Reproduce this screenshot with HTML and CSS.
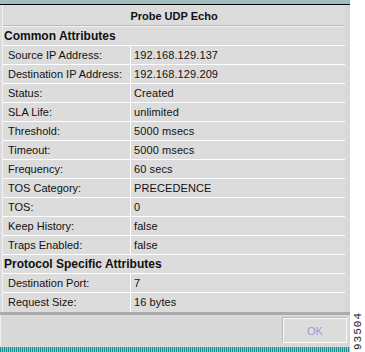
FILE: index.html
```html
<!DOCTYPE html>
<html lang="en">
<head>
    <meta charset="UTF-8">
    <title>Probe UDP Echo</title>
    <link rel="stylesheet" href="styles.css">
</head>
<body>
    <div class="page">
        <div class="window">
            <div class="top-strip"></div>
            <div class="top-rule"></div>
            <div class="sheet">
                <div class="title-row">Probe UDP Echo</div>
                <div class="section-row">Common Attributes</div>
                <div class="row"><span class="label">Source IP Address:</span><span class="value">192.168.129.137</span></div>
                <div class="row"><span class="label">Destination IP Address:</span><span class="value">192.168.129.209</span></div>
                <div class="row"><span class="label">Status:</span><span class="value">Created</span></div>
                <div class="row"><span class="label">SLA Life:</span><span class="value">unlimited</span></div>
                <div class="row"><span class="label">Threshold:</span><span class="value">5000 msecs</span></div>
                <div class="row"><span class="label">Timeout:</span><span class="value">5000 msecs</span></div>
                <div class="row"><span class="label">Frequency:</span><span class="value">60 secs</span></div>
                <div class="row"><span class="label">TOS Category:</span><span class="value">PRECEDENCE</span></div>
                <div class="row"><span class="label">TOS:</span><span class="value">0</span></div>
                <div class="row"><span class="label">Keep History:</span><span class="value">false</span></div>
                <div class="row"><span class="label">Traps Enabled:</span><span class="value">false</span></div>
                <div class="section-row">Protocol Specific Attributes</div>
                <div class="row"><span class="label">Destination Port:</span><span class="value">7</span></div>
                <div class="row"><span class="label">Request Size:</span><span class="value">16 bytes</span></div>
            </div>
            <div class="gray-bar"></div>
            <div class="footer">
                <button class="ok-button" disabled>OK</button>
            </div>
            <div class="bottom-strip"></div>
        </div>
        <div class="side-note">93504</div>
    </div>
</body>
</html>
```

FILE: styles.css
```css
* {
    box-sizing: border-box;
}

body {
    margin: 0;
    background: #fff;
    font-family: 'Liberation Sans', Arial, sans-serif;
    font-size: 11px;
    color: #111;
}

.page {
    display: flex;
    width: 365px;
    height: 352px;
}

.window {
    width: 350px;
    height: 352px;
    display: flex;
    flex-direction: column;
    background: #dcdcdc;
}

.top-strip {
    height: 4px;
    background: #9fbfbf;
}

.top-rule {
    height: 1px;
    background: #000;
}

.sheet {
    margin-left: 2px;
    border-left: 1px solid #f0f0f0;
    border-right: 5px solid #d8d8d8;
}

.title-row {
    height: 22px;
    line-height: 22px;
    text-align: center;
    font-weight: bold;
    border-bottom: 1px solid #f2f2f2;
    box-shadow: 0 -1px 0 #bcbcbc inset;
}

.section-row {
    height: 19px;
    line-height: 18px;
    padding-left: 1px;
    font-size: 12px;
    font-weight: bold;
    border-bottom: 1px solid #fff;
}

.row {
    display: flex;
    height: 19px;
    line-height: 18px;
    border-bottom: 1px solid #fff;
}

.label {
    width: 128px;
    padding-left: 5px;
    border-right: 1px solid #fff;
}

.value {
    flex: 1;
    padding-left: 3px;
    letter-spacing: 0.1px;
}

.row:last-child {
    border-bottom: none;
}

.gray-bar {
    height: 3px;
    background: #acacac;
}

.footer {
    flex: 1;
    display: flex;
    justify-content: flex-end;
    align-items: flex-start;
    padding: 3px 3px 0 0;
    background: #d9d9d9;
    border-left: 1px solid #eee;
}

.ok-button {
    width: 64px;
    height: 25px;
    background: #dcdcdc;
    border: 1px solid #fafafa;
    box-shadow: -1px -1px 0 #b8b8b8;
    font-family: 'Liberation Sans', Arial, sans-serif;
    font-size: 11px;
    color: #9a9ad0;
}

.bottom-strip {
    height: 5px;
    background: repeating-linear-gradient(90deg, #1f8e8e 0 1px, #8fc8c8 1px 2px);
}

.side-note {
    align-self: flex-end;
    margin: 0 0 2px 3px;
    writing-mode: vertical-rl;
    transform: rotate(180deg);
    font-family: 'Liberation Mono', monospace;
    font-size: 11px;
    letter-spacing: 1px;
    line-height: 10px;
    color: #222;
}
```
